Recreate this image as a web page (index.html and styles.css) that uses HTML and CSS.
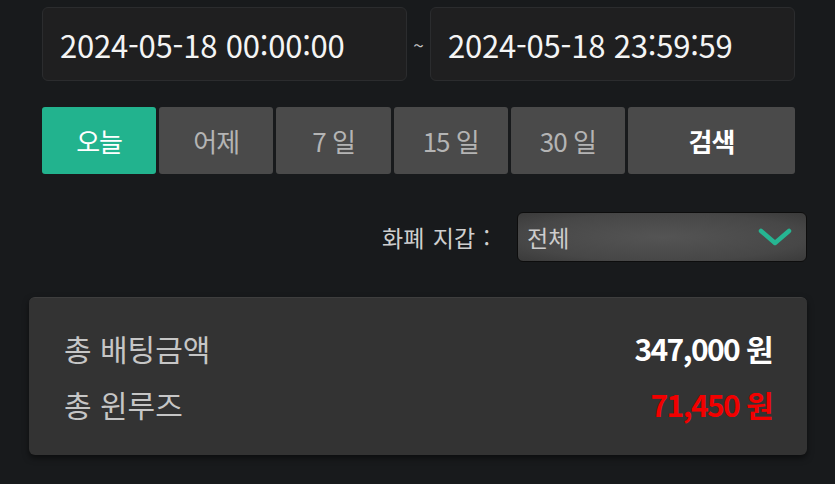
FILE: index.html
```html
<!DOCTYPE html>
<html lang="ko">
<head>
<meta charset="utf-8">
<link rel="stylesheet" href="styles.css">
</head>
<body>
<div class="wrap">
  <div class="dates">
    <div class="date-box">2024-05-18 00:00:00</div>
    <span class="tilde">~</span>
    <div class="date-box">2024-05-18 23:59:59</div>
  </div>
  <div class="quick">
    <button class="qbtn active">오늘</button>
    <button class="qbtn">어제</button>
    <button class="qbtn">7 일</button>
    <button class="qbtn">15 일</button>
    <button class="qbtn">30 일</button>
    <button class="qbtn search">검색</button>
  </div>
  <div class="filter">
    <span class="filter-label">화폐 지갑 :</span>
    <div class="select">
      <span class="select-value">전체</span>
      <svg class="chev" width="34" height="20" viewBox="0 0 34 20"><path d="M3 4 L17 16 L31 4" fill="none" stroke="#26b592" stroke-width="4.5" stroke-linecap="round" stroke-linejoin="round"/></svg>
    </div>
  </div>
  <div class="card">
    <div class="row">
      <span class="label">총 배팅금액</span>
      <span class="value">347,000 원</span>
    </div>
    <div class="row">
      <span class="label">총 윈루즈</span>
      <span class="value red">71,450 원</span>
    </div>
  </div>
</div>
</body>
</html>
```

FILE: styles.css
```css
html, body {
  margin: 0;
  padding: 0;
  background: #181a1c;
  width: 835px;
  height: 484px;
  overflow: hidden;
  font-family: "Noto Sans CJK KR", "Noto Sans", sans-serif;
}
.wrap {
  padding: 7px 28px 0 29px;
}
.dates {
  display: flex;
  align-items: center;
  margin: 0 12px 0 13px;
}
.date-box {
  flex: 1;
  height: 74px;
  box-sizing: border-box;
  border: 1px solid #2b2c2e;
  border-radius: 6px;
  background: #1f1f20;
  color: #f4f4f4;
  font-size: 31px;
  display: flex;
  align-items: center;
  padding-left: 17px;
  letter-spacing: -0.2px;
}
.tilde {
  width: 23px;
  text-align: center;
  color: #c4c4c4;
  font-size: 19px;
}
.quick {
  display: grid;
  grid-template-columns: repeat(5, 1fr) 167px;
  gap: 3px;
  margin: 26px 12px 0 13px;
  height: 67px;
}
.qbtn {
  border: none;
  border-radius: 3px;
  background: #4a4a4a;
  color: #b4b4b4;
  font-family: inherit;
  font-size: 26px;
  padding: 0;
  letter-spacing: -1px;
}
.qbtn.active {
  background: #22b38e;
  color: #fff;
}
.qbtn.search {
  color: #fff;
  font-weight: 700;
}
.filter {
  display: flex;
  justify-content: flex-end;
  align-items: center;
  margin-top: 38px;
  gap: 27px;
}
.filter-label {
  color: #cfcfcf;
  font-size: 23px;
  word-spacing: 2px;
}
.select {
  width: 290px;
  height: 50px;
  box-sizing: border-box;
  border: 1px solid #0d0d0d;
  border-radius: 6px;
  background: radial-gradient(ellipse at center, #545454 0%, #474747 70%, #3a3a3a 100%);
  display: flex;
  align-items: center;
  justify-content: space-between;
  padding: 0 14px 0 9px;
}
.select-value {
  color: #cdcdcd;
  font-size: 23px;
}
.card {
  margin-top: 35px;
  height: 158px;
  box-sizing: border-box;
  border-radius: 6px;
  background: #333333;
  border-top: 1px solid #3e3e3e;
  box-shadow: 0 3px 6px rgba(0,0,0,0.5);
  padding: 32px 35px 0 35px;
  display: flex;
  flex-direction: column;
  gap: 20px;
}
.row {
  display: flex;
  justify-content: space-between;
  align-items: center;
  height: 36px;
}
.label {
  color: #c6c6c6;
  font-size: 30px;
}
.value {
  color: #fff;
  font-size: 30px;
  font-weight: 700;
  letter-spacing: -1.6px;
}
.value.red {
  color: #f20000;
}
```
